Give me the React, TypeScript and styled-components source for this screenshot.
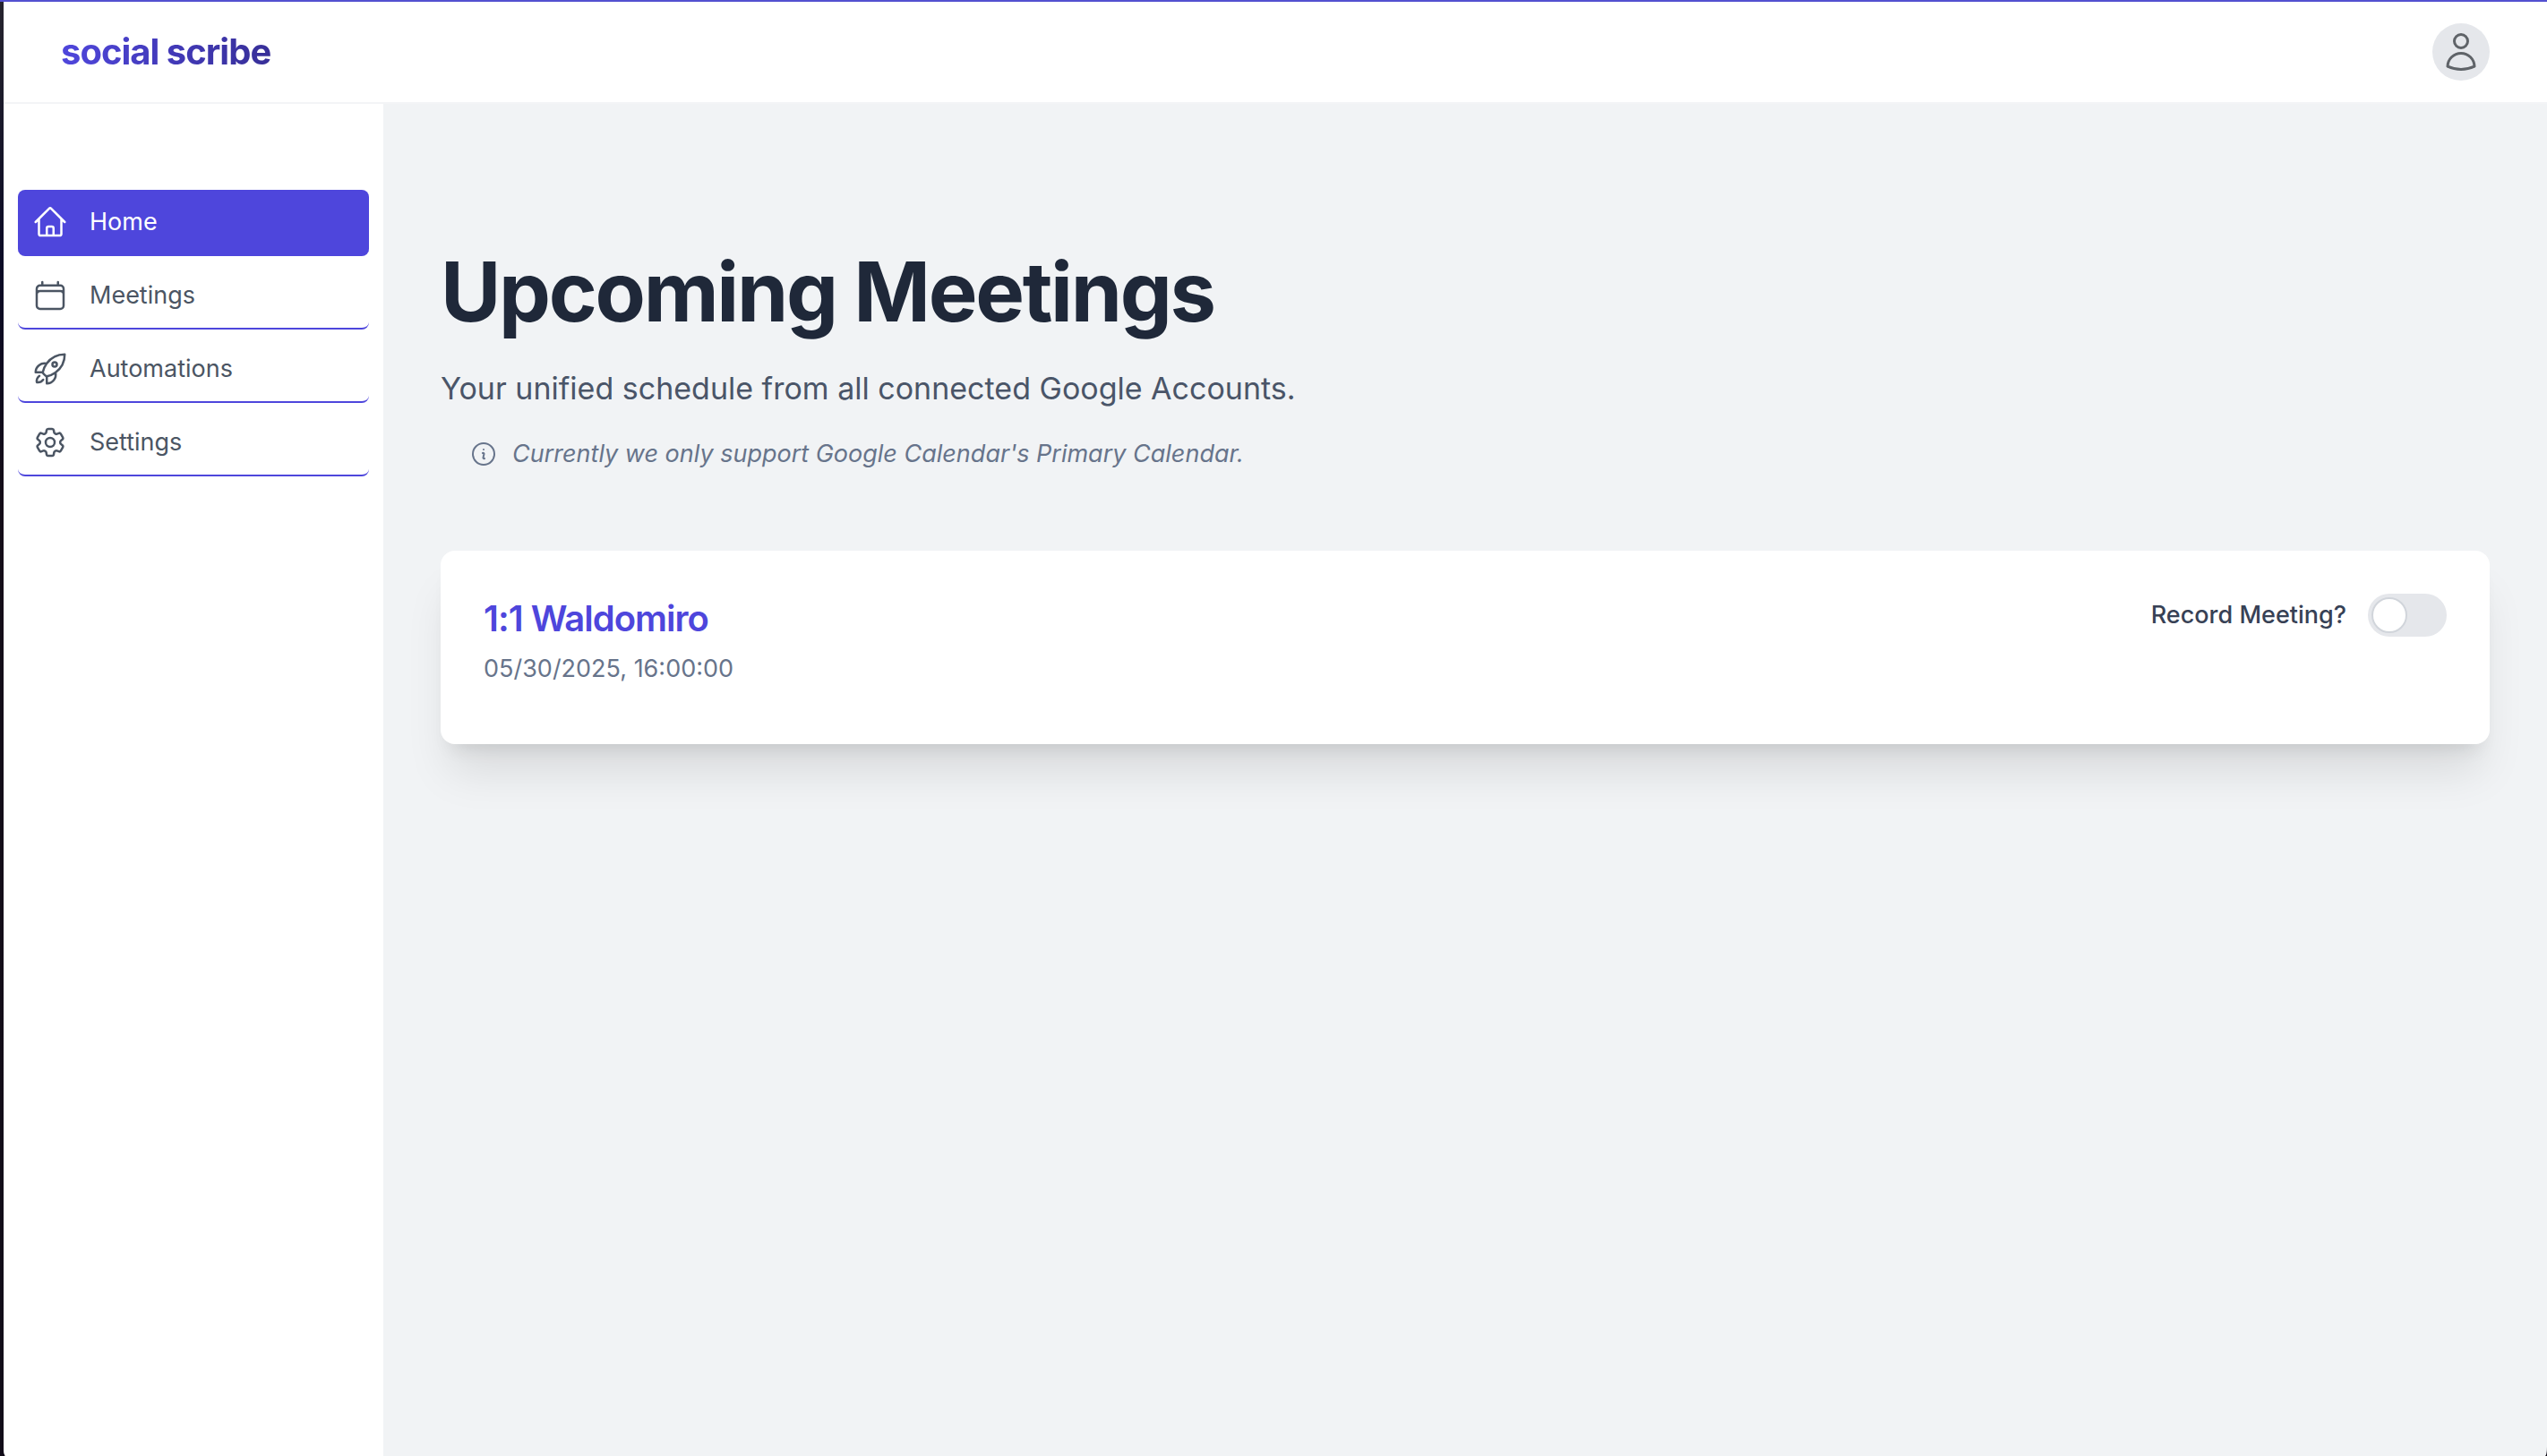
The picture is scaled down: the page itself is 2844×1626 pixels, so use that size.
import React from "react";
import styled, { createGlobalStyle } from "styled-components";
import {
  HiOutlineCalendar,
  HiOutlineCog6Tooth,
  HiOutlineHome,
  HiOutlineInformationCircle,
  HiOutlineRocketLaunch,
  HiOutlineUser,
} from "react-icons/hi2";

const GlobalStyle = createGlobalStyle`
  *, *::before, *::after { box-sizing: border-box; }
  body {
    margin: 0;
    font-family: Inter, "Liberation Sans", sans-serif;
    font-size: 27px;
    -webkit-font-smoothing: antialiased;
  }
  h1, h2, p, ul { margin: 0; padding: 0; }
`;

/* Dark window edge on the left, accent line on top */
const Frame = styled.div`
  min-height: 100vh;
  display: flex;
  padding: 2px 0 0 4px;
  background:
    linear-gradient(#5350d0, #5350d0) 0 0 / 100% 2px no-repeat,
    linear-gradient(#26242e 0%, #0b0b26 18%, #140d18 34%, #110c18 100%);
`;

const Shell = styled.div`
  flex: 1;
  display: flex;
  flex-direction: column;
  overflow: hidden;
  background: #f1f3f5;
  border-radius: 0 0 2px 2px / 0 0 10px 10px;
`;

const Header = styled.header`
  display: flex;
  align-items: center;
  justify-content: space-between;
  padding: 24px 64px;
  background: #fff;
  border-bottom: 2px solid #f3f4f6;
`;

const Logo = styled.a`
  font-size: 40px;
  line-height: 56px;
  font-weight: 700;
  letter-spacing: -0.025em;
  text-decoration: none;
  color: transparent;
  background: linear-gradient(to right, #4f46dc, #372f98);
  background-clip: text;
  -webkit-background-clip: text;
`;

const AvatarButton = styled.button`
  display: flex;
  align-items: center;
  justify-content: center;
  width: 64px;
  height: 64px;
  padding: 0;
  border: 0;
  border-radius: 50%;
  background: #e5e7eb;
  color: #5f6368;
  font-size: 48px;
  cursor: pointer;
`;

const Body = styled.div`
  flex: 1;
  display: flex;
`;

const Sidebar = styled.aside`
  flex: none;
  width: 424px;
  padding: 96px 16px;
  background: #fff;
`;

const NavList = styled.ul`
  display: flex;
  flex-direction: column;
  gap: 8px;
  list-style: none;
`;

const NavLink = styled.a<{ $active?: boolean }>`
  display: flex;
  align-items: center;
  gap: 24px;
  height: 74px;
  padding: 0 16px;
  border-radius: 8px;
  border-bottom: 2px solid #4e46dc;
  background: ${(p) => (p.$active ? "#4e46dc" : "transparent")};
  color: ${(p) => (p.$active ? "#fff" : "#4b5563")};
  line-height: 40px;
  text-decoration: none;

  svg {
    flex: none;
    width: 40px;
    height: 40px;
  }
`;

const Main = styled.main`
  flex: 1;
  min-width: 0;
  padding: 160px 64px 64px;
`;

const PageHeading = styled.div`
  margin-bottom: 85px;
`;

const Title = styled.h1`
  font-size: 92px;
  line-height: 100px;
  font-weight: 700;
  letter-spacing: -0.025em;
  color: #1f2839;
`;

const Subtitle = styled.p`
  && { margin-top: 28px; }
  font-size: 34px;
  line-height: 60px;
  color: #4a5568;
`;

const Note = styled.p`
  && { margin-top: 20px; padding: 0 32px; }
  display: flex;
  align-items: center;
  gap: 16px;
  line-height: 46px;
  font-style: italic;
  color: #67748b;

  svg {
    flex: none;
    width: 32px;
    height: 32px;
  }
`;

const Card = styled.article`
  display: flex;
  align-items: flex-start;
  justify-content: space-between;
  padding: 48px 48px 64px;
  border-radius: 16px;
  background: #fff;
  box-shadow: 0 40px 50px -10px rgba(0, 0, 0, 0.1), 0 16px 20px -12px rgba(0, 0, 0, 0.1);
`;

const MeetingTitle = styled.h2`
  font-size: 40px;
  line-height: 56px;
  font-weight: 600;
  letter-spacing: -0.025em;
  color: #4e46dc;
`;

const MeetingTime = styled.p`
  && { margin-top: 8px; }
  line-height: 40px;
  color: #67748b;
`;

const RecordLabel = styled.label`
  display: flex;
  align-items: center;
  gap: 24px;
  line-height: 48px;
  font-weight: 500;
  color: #374155;
  cursor: pointer;
`;

const Toggle = styled.input`
  appearance: none;
  display: flex;
  align-items: center;
  width: 88px;
  height: 48px;
  margin: 0;
  padding: 4px;
  border-radius: 24px;
  background: #e5e7eb;
  cursor: pointer;

  &::before {
    content: "";
    width: 40px;
    height: 40px;
    border: 2px solid #d1d5db;
    border-radius: 50%;
    background: #fff;
    transition: margin 0.15s;
  }

  &:checked { background: #4e46dc; }
  &:checked::before { margin-left: 40px; border-color: #fff; }
`;

const NAV_ITEMS = [
  { label: "Home", Icon: HiOutlineHome },
  { label: "Meetings", Icon: HiOutlineCalendar },
  { label: "Automations", Icon: HiOutlineRocketLaunch },
  { label: "Settings", Icon: HiOutlineCog6Tooth },
];

export default function App() {
  return (
    <Frame>
      <GlobalStyle />
      <Shell>
        <Header>
          <Logo href="#">social scribe</Logo>
          <AvatarButton type="button" aria-label="Account">
            <HiOutlineUser />
          </AvatarButton>
        </Header>
        <Body>
          <Sidebar>
            <nav>
              <NavList>
                {NAV_ITEMS.map(({ label, Icon }, i) => (
                  <li key={label}>
                    <NavLink href={`#${label.toLowerCase()}`} $active={i === 0}>
                      <Icon />
                      {label}
                    </NavLink>
                  </li>
                ))}
              </NavList>
            </nav>
          </Sidebar>
          <Main>
            <PageHeading>
              <Title>Upcoming Meetings</Title>
              <Subtitle>Your unified schedule from all connected Google Accounts.</Subtitle>
              <Note>
                <HiOutlineInformationCircle />
                Currently we only support Google Calendar's Primary Calendar.
              </Note>
            </PageHeading>
            <Card>
              <div>
                <MeetingTitle>1:1 Waldomiro</MeetingTitle>
                <MeetingTime>05/30/2025, 16:00:00</MeetingTime>
              </div>
              <RecordLabel htmlFor="record-meeting">
                Record Meeting?
                <Toggle id="record-meeting" type="checkbox" />
              </RecordLabel>
            </Card>
          </Main>
        </Body>
      </Shell>
    </Frame>
  );
}
